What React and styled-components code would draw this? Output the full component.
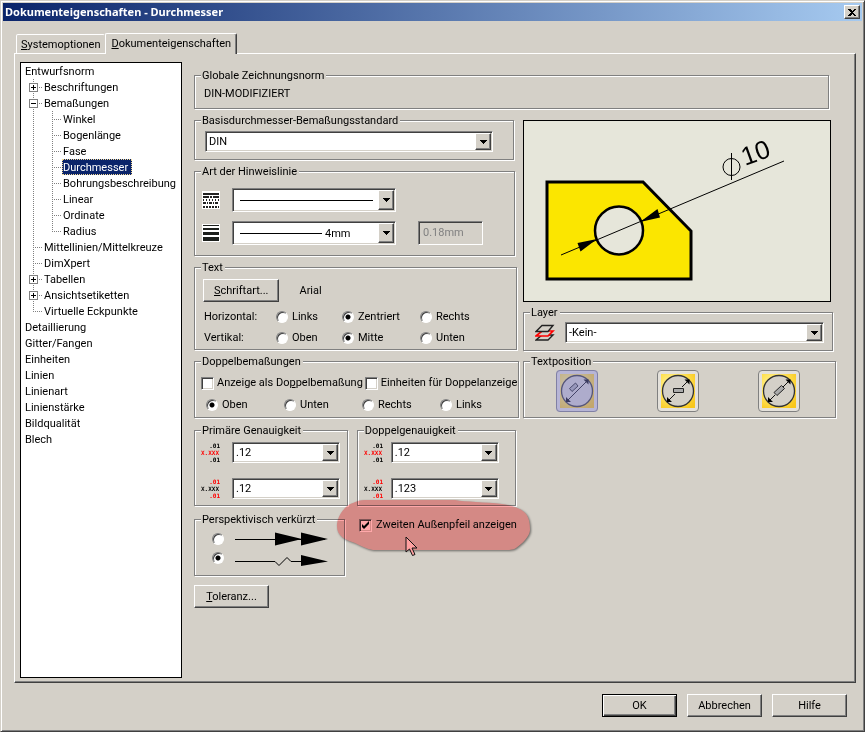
import React, {useState} from 'react';
import styled, {createGlobalStyle, css} from 'styled-components';

const GlobalStyle = createGlobalStyle`
  * {
    box-sizing: border-box;
  }
  body {
    margin: 0;
    background: #d4d0c8;
  }
  body, button, input, select {
    font-family: Roboto, 'Liberation Sans', sans-serif;
    font-size: 11px;
    line-height: 13px;
    color: #000;
  }
`;

const Raised = css`
  background: #d4d0c8;
  border: 1px solid;
  border-color: #fff #404040 #404040 #fff;
  box-shadow: inset -1px -1px 0 #808080;
`;

const Sunken = css`
  border: 1px solid;
  border-color: #808080 #fff #fff #808080;
  box-shadow: inset 1px 1px 0 #404040, inset -1px -1px 0 #d4d0c8;
`;

const Dialog = styled.div`
  display: flex;
  flex-direction: column;
  min-height: 100vh;
  padding: 2px;
  background: #d4d0c8;
  border: 1px solid;
  border-color: #d4d0c8 #404040 #404040 #d4d0c8;
  box-shadow: inset 1px 1px 0 #fff, inset -1px -1px 0 #808080;
`;

const TitleBar = styled.header`
  display: flex;
  align-items: center;
  justify-content: space-between;
  height: 18px;
  padding: 0 2px;
  background: linear-gradient(to right, #0a246a, #a6caf0);
`;

const Title = styled.h1`
  margin: 0;
  font-family: 'Noto Sans', sans-serif;
  font-size: 11px;
  line-height: 18px;
  font-weight: bold;
  color: #fff;
`;

const CloseButton = styled.button`
  ${Raised};
  display: flex;
  align-items: center;
  justify-content: center;
  width: 16px;
  height: 14px;
  padding: 0;
`;

const Tabs = styled.div`
  display: flex;
  align-items: flex-end;
  padding: 12px 13px 0;
`;

const Tab = styled.button`
  height: 19px;
  padding: 0 4px;
  white-space: nowrap;
  background: #d4d0c8;
  border: 1px solid;
  border-color: #fff transparent transparent #fff;
  border-bottom: 0;
  border-radius: 2px 2px 0 0;
  ${({$active}) => $active && css`
    position: relative;
    height: 21px;
    padding: 0 5px 2px;
    margin-bottom: -1px;
    border-right: 1px solid #404040;
    box-shadow: inset -1px 0 0 #808080;
  `}
`;

const Panel = styled.div`
  flex: 1;
  display: flex;
  gap: 12px;
  margin: 0 6px 0 11px;
  padding: 8px 19px 4px 5px;
  border: 1px solid;
  border-color: #fff #404040 #404040 #fff;
  box-shadow: inset -1px -1px 0 #808080;
`;

const TreeView = styled.ul`
  flex: none;
  width: 162px;
  margin: 0;
  padding: 0 0 0 3px;
  list-style: none;
  background: #fff;
  border: 1px solid #000;
`;

const TreeRow = styled.li`
  display: flex;
  height: 16px;
  line-height: 17px;
  white-space: nowrap;
`;

const vLine = height => `repeating-linear-gradient(to bottom, #808080 0 1px, transparent 1px 2px) 9px 0 / 1px ${height} no-repeat`;
const hLine = 'repeating-linear-gradient(to right, #808080 0 1px, transparent 1px 2px) 9px 8px / 10px 1px no-repeat';
const guides = {
  pass: vLine('16px'),
  branch: `${vLine('16px')}, ${hLine}`,
  end: `${vLine('8px')}, ${hLine}`,
};

const Guide = styled.span`
  display: flex;
  justify-content: center;
  width: 19px;
  padding-top: 4px;
  background: ${({$kind}) => guides[$kind]};
`;

const Toggle = styled.button`
  width: 9px;
  height: 9px;
  padding: 0;
  line-height: 0;
  background: #fff;
  border: 1px solid #808080;
`;

const TreeLabel = styled.span`
  padding: 0 1px;
  ${({$selected}) => $selected && css`
    padding: 0 4px 0 1px;
    color: #fff;
    background: #0a246a;
    outline: 1px dotted #f5db95;
    outline-offset: -1px;
  `}
`;

const Main = styled.main`
  flex: 1;
  min-width: 0;
  padding-top: 7px;
`;

const Columns = styled.div`
  display: grid;
  grid-template-columns: 325fr 313fr;
  gap: 4px;
  padding-top: 5px;
`;

const Column = styled.div`
  display: flex;
  flex-direction: column;
  gap: 5px;
  min-width: 0;
`;

const PreviewColumn = styled(Column)`
  gap: 4px;
  padding-top: 6px;
`;

const Group = styled.fieldset`
  flex: ${({$grow}) => $grow || 'none'};
  min-width: 0;
  height: ${({$height}) => $height}px;
  margin: 0 ${({$inset}) => $inset || 0}px 0 0;
  padding: 0 6px;
  border: 1px solid #808080;
  box-shadow: 1px 1px 0 #fff, inset 1px 1px 0 #fff;
`;

const Legend = styled.legend`
  padding: 0 2px 0 1px;
  height: 13px;
  line-height: 14px;
  white-space: nowrap;
  background: #d4d0c8;
`;

const NormName = styled.div`
  padding: 3px 3px 0;
  line-height: 17px;
`;

const ComboBox = styled.span`
  display: grid;
  flex: ${({$width}) => $width ? `0 0 ${$width}px` : '1'};
  height: ${({$tall}) => $tall ? 24 : 21}px;
  padding: 2px;
  background: #fff;
  ${Sunken};
  & > * {
    grid-area: 1 / 1;
  }
`;

const ComboSelect = styled.select`
  width: 100%;
  min-width: 0;
  padding: 0 18px 0 ${({$indent}) => $indent || 1}px;
  appearance: none;
  background: transparent;
  border: 0;
  border-radius: 0;
`;

const ComboArrow = styled.span`
  ${Raised};
  display: flex;
  align-items: center;
  justify-content: center;
  justify-self: end;
  width: 16px;
  margin: -1px;
  pointer-events: none;
`;

const ComboLine = styled.span`
  align-self: center;
  width: ${({$width}) => $width}px;
  height: 1px;
  margin-left: 5px;
  background: #000;
  pointer-events: none;
`;

const Row = styled.div`
  display: flex;
  align-items: center;
  gap: ${({$gap}) => $gap || 0}px;
  padding: ${({$pad}) => $pad || 0};
`;

const StyleRows = styled.div`
  display: grid;
  gap: 9px;
  padding: 10px 1px 0;
`;

const WidthField = styled.input`
  width: 65px;
  height: 24px;
  margin-left: 10px;
  padding: 0 4px 2px;
  background: #d4d0c8;
  color: #808080;
  ${Sunken};
`;

const Button = styled.button`
  ${Raised};
  min-width: 75px;
  height: 23px;
  padding: 0 10px;
  white-space: nowrap;
  ${({$primary}) => $primary && css`
    border-color: #000;
    box-shadow: inset 1px 1px 0 #fff, inset -1px -1px 0 #404040, inset -2px -2px 0 #808080;
  `}
`;

const AlignGrid = styled.div`
  display: grid;
  grid-template-columns: 72px 66px 78px 1fr;
  row-gap: 5px;
  padding: 7px 3px 0;
  line-height: 16px;
`;

const Option = styled.label`
  display: flex;
  align-items: center;
  gap: 4px;
  line-height: 16px;
  white-space: nowrap;
`;

const Radio = styled.input.attrs({type: 'radio'})`
  flex: none;
  appearance: none;
  width: 12px;
  height: 12px;
  margin: 0;
  border: 1px solid;
  border-color: #808080 #fff #fff #808080;
  border-radius: 50%;
  background: #fff;
  box-shadow: inset 1px 1px 0 #404040;
  &:checked {
    background: radial-gradient(circle, #000 2px, #fff 3px);
  }
`;

const CheckBox = styled.input.attrs({type: 'checkbox'})`
  flex: none;
  appearance: none;
  width: 13px;
  height: 13px;
  margin: 0;
  background: #fff;
  ${Sunken};
  &:checked {
    background: #fff url("data:image/svg+xml,%3Csvg xmlns='http://www.w3.org/2000/svg' width='11' height='11'%3E%3Cpath d='M2 4v3l2 2 5-5V1L4 6z'/%3E%3C/svg%3E") no-repeat;
  }
`;

const DualChecks = styled.div`
  display: flex;
  gap: 2px;
  padding: 7px 0 0;
  & > label {
    gap: 3px;
  }
`;

const DualRadios = styled.div`
  display: grid;
  grid-template-columns: repeat(3, 78px) 1fr;
  padding: 6px 5px 0;
`;

const PrecisionRows = styled.div`
  display: grid;
  gap: 15px;
  padding: 5px 0 0;
`;

const Precisions = styled.div`
  display: flex;
  gap: 9px;
  padding: 1px 3px 0 0;
`;

const Foreshortened = styled.div`
  display: flex;
  gap: 12px;
  padding-top: 2px;
`;

const ArrowOptions = styled.div`
  display: grid;
  gap: 3px;
  padding: 5px 11px 0;
`;

const ArrowOption = styled.label`
  display: flex;
  align-items: center;
  gap: 11px;
`;

const Highlighted = styled.div`
  position: relative;
  flex: 1;
  padding: 4px 0 0 2px;
`;

const Marker = styled.svg`
  position: absolute;
  left: -22px;
  top: -15px;
  mix-blend-mode: multiply;
  filter: drop-shadow(1px 1px 1px rgba(0, 0, 0, 0.5));
  pointer-events: none;
`;

const Pointer = styled.svg`
  position: absolute;
  left: 48px;
  top: 23px;
  pointer-events: none;
`;

const ToleranceRow = styled.div`
  padding-top: 4px;
`;

const Preview = styled.div`
  height: 182px;
  margin-right: 5px;
  background: #e6e6da;
  border: 1px solid #000;
  svg {
    display: block;
    width: 100%;
    height: 100%;
  }
`;

const PositionRow = styled.div`
  display: flex;
  gap: 59px;
  padding: 2px 26px 0;
`;

const PositionButton = styled.button`
  width: 42px;
  height: 42px;
  padding: 0;
  line-height: 0;
  background: none;
  border: 0;
`;

const Footer = styled.footer`
  display: flex;
  justify-content: flex-end;
  gap: 10px;
  padding: 11px 15px 12px;
`;

const treeItems = [
  {label: 'Entwurfsnorm', guides: []},
  {label: 'Beschriftungen', guides: ['branch'], toggle: 'plus'},
  {label: 'Bemaßungen', guides: ['branch'], toggle: 'minus'},
  {label: 'Winkel', guides: ['pass', 'branch']},
  {label: 'Bogenlänge', guides: ['pass', 'branch']},
  {label: 'Fase', guides: ['pass', 'branch']},
  {label: 'Durchmesser', guides: ['pass', 'branch']},
  {label: 'Bohrungsbeschreibung', guides: ['pass', 'branch']},
  {label: 'Linear', guides: ['pass', 'branch']},
  {label: 'Ordinate', guides: ['pass', 'branch']},
  {label: 'Radius', guides: ['pass', 'end']},
  {label: 'Mittellinien/Mittelkreuze', guides: ['branch']},
  {label: 'DimXpert', guides: ['branch']},
  {label: 'Tabellen', guides: ['branch'], toggle: 'plus'},
  {label: 'Ansichtsetiketten', guides: ['branch'], toggle: 'plus'},
  {label: 'Virtuelle Eckpunkte', guides: ['end']},
  ...['Detaillierung', 'Gitter/Fangen', 'Einheiten', 'Linien', 'Linienart', 'Linienstärke', 'Bildqualität', 'Blech']
    .map(label => ({label, guides: []})),
];

const Tree = () => {
  const [selected, setSelected] = useState('Durchmesser');
  return (
    <TreeView>
      {treeItems.map(item =>
        <TreeRow key={item.label} onClick={() => setSelected(item.label)}>
          {item.guides.map((kind, i) =>
            <Guide $kind={kind} key={i}>
              {item.toggle &&
              <Toggle aria-label={item.label}>
                <svg width="7" height="7" shapeRendering="crispEdges">
                  <path d={item.toggle === 'plus' ? 'M1 3h5v1H1zM3 1h1v5H3z' : 'M1 3h5v1H1z'}/>
                </svg>
              </Toggle>
              }
            </Guide>
          )}
          <TreeLabel $selected={item.label === selected}>{item.label}</TreeLabel>
        </TreeRow>
      )}
    </TreeView>
  );
};

const Combo = ({label, value, width, tall, indent, line}) => (
  <ComboBox $width={width} $tall={tall}>
    <ComboSelect aria-label={label} $indent={indent}>
      <option>{value}</option>
    </ComboSelect>
    {line && <ComboLine $width={line}/>}
    <ComboArrow>
      <svg width="7" height="4" shapeRendering="crispEdges"><path d="M0 0h7L3.5 4z"/></svg>
    </ComboArrow>
  </ComboBox>
);

const RadioOption = ({name, label, checked}) => (
  <Option>
    <Radio name={name} defaultChecked={checked}/>
    <span>{label}</span>
  </Option>
);

const LineStyleIcon = () => (
  <svg width="18" height="18" shapeRendering="crispEdges">
    <path d="M0 0h18v18H0z" fill="#fff"/>
    <path d="M1 2h16v2H1z" fill="#222"/>
    <g stroke="#222" strokeWidth="2" fill="none">
      <path d="M1 6h16" strokeDasharray="6 1 2 1"/>
      <path d="M1 9h16" strokeDasharray="1 2"/>
      <path d="M1 12h16" strokeDasharray="3 1 1 1"/>
      <path d="M1 16h16" strokeDasharray="2 1"/>
    </g>
  </svg>
);

const LineWidthIcon = () => (
  <svg width="18" height="18" shapeRendering="crispEdges">
    <path d="M0 0h18v18H0z" fill="#fff"/>
    <path d="M1 1h16v1H1zM1 4h16v2H1zM1 8h16v3H1zM1 13h16v4H1z" fill="#1c1f1c"/>
  </svg>
);

const PrecisionIcon = ({tolerance}) => {
  const main = tolerance ? '#000' : '#f00';
  const side = tolerance ? '#f00' : '#000';
  return (
    <svg width="19" height="19" fontFamily="DejaVu Sans Mono" fontWeight="bold" fontSize="6">
      <text x="19" y="5" textAnchor="end" fill={side}>.01</text>
      <text x="0" y="12" fill={main}>X.XXX</text>
      <text x="19" y="19" textAnchor="end" fill={side}>.01</text>
    </svg>
  );
};

const PrecisionGroup = ({title, values, grow, pad}) => (
  <Group $height={82} $grow={grow}>
    <Legend>{title}</Legend>
    <PrecisionRows>
      {values.map((value, i) =>
        <Row $gap={pad} key={i}>
          <PrecisionIcon tolerance={i === 1}/>
          <Combo label={title} value={value} width={108} indent={1}/>
        </Row>
      )}
    </PrecisionRows>
  </Group>
);

const LayerIcon = () => (
  <svg width="20" height="18" fill="none" strokeWidth="1.4">
    <path d="M1 16l6-5h11l-5 5z" stroke="#222" fill="#d4d0c8"/>
    <path d="M1 12l6-5h11l-5 5z" stroke="#f00" strokeWidth="1.700" fill="#d4d0c8"/>
    <path d="M1 7.500 7 1.500h11l-5 6z" stroke="#222" fill="#d4d0c8"/>
  </svg>
);

const DiameterPreview = () => (
  <svg viewBox="0 0 306 180" preserveAspectRatio="xMinYMin meet">
    <path d="M23 61h96l48 49v48H23z" fill="#fbe600" stroke="#000" strokeWidth="3"/>
    <circle cx="95" cy="109.500" r="24" fill="#e6e6da" stroke="#000" strokeWidth="2.500"/>
    <path d="M37 134 260 40" stroke="#000"/>
    <path d="M116 101l17.500-13 2.500 8.500zM73 118l-19.500 4 3 8.500z"/>
    <circle cx="207.500" cy="46" r="8.500" fill="none" stroke="#000"/>
    <path d="M207.500 32v27" stroke="#000"/>
    <text transform="translate(221 45) rotate(-20)" fontFamily="Liberation Sans" fontSize="26">10</text>
  </svg>
);

const positions = [
  {id: 'above', name: 'Text über der Linie', box: 'M13.500 18.500l6-5.500 2.500 3-6 5.500z', line: 'M12 30 31 11'},
  {id: 'broken', name: 'Text horizontal', box: 'M16.500 18.500h10v4h-10z', line: 'M12 30l6-6M25 17l6-6'},
  {id: 'aligned', name: 'Text ausgerichtet', box: 'M16 22.500l7.500-7 3 3-7.500 7z', line: 'M12 30l5-5M25 17l6-6'},
];

const PositionIcon = ({box, line, active}) => (
  <svg width="42" height="42">
    <defs>
      <radialGradient id="glow" cx="35%" cy="35%" r="80%">
        <stop offset="0" stopColor="#fff6b0"/>
        <stop offset="0.5" stopColor="#ffe45c"/>
        <stop offset="1" stopColor="#f9c71c"/>
      </radialGradient>
    </defs>
    <rect x="0.500" y="0.500" width="41" height="41" rx="3.500" fill="#e4e1db" stroke="#808080"/>
    <rect x="4" y="4" width="34" height="34" fill="url(#glow)"/>
    <circle cx="21" cy="21" r="15.500" fill="#d4d0c8" stroke="#333" strokeWidth="1.300"/>
    <path d={line} stroke="#111"/>
    <path d="M32.500 9.500v5l-5-5zM10 32v-5l5 5z"/>
    <path d={box} fill="#aaa" stroke="#222"/>
    {active && <rect x="0" y="0" width="42" height="42" rx="4" fill="#8080d0" opacity="0.45"/>}
  </svg>
);

const App = () => {
  const [position, setPosition] = useState('above');

  return (
    <>
      <GlobalStyle/>
      <Dialog>
        <TitleBar>
          <Title>Dokumenteigenschaften - Durchmesser</Title>
          <CloseButton aria-label="Schließen">
            <svg width="8" height="7" shapeRendering="crispEdges"><path d="M0 0h2l2 2 2-2h2L5 3.500 8 7H6L4 5 2 7H0l3-3.500z"/></svg>
          </CloseButton>
        </TitleBar>
        <Tabs role="tablist">
          <Tab role="tab"><u>S</u>ystemoptionen</Tab>
          <Tab role="tab" aria-selected="true" $active><u>D</u>okumenteigenschaften</Tab>
        </Tabs>
        <Panel>
          <Tree/>
          <Main>
            <Group $height={40} $inset={7}>
              <Legend>Globale Zeichnungsnorm</Legend>
              <NormName>DIN-MODIFIZIERT</NormName>
            </Group>
            <Columns>
              <Column>
                <Group $height={46} $inset={5}>
                  <Legend>Basisdurchmesser-Bemaßungsstandard</Legend>
                  <Row $pad="4px 14px 0 4px">
                    <Combo label="Bemaßungsstandard" value="DIN"/>
                  </Row>
                </Group>
                <Group $height={91} $inset={4}>
                  <Legend>Art der Hinweislinie</Legend>
                  <StyleRows>
                    <Row $gap={12}>
                      <LineStyleIcon/>
                      <Combo label="Linienart" value="" width={164} line={133} tall/>
                    </Row>
                    <Row $gap={12}>
                      <LineWidthIcon/>
                      <Combo label="Linienstärke" value="4mm" width={164} line={82} indent={90} tall/>
                      <WidthField aria-label="Stärke" defaultValue="0.18mm" disabled/>
                    </Row>
                  </StyleRows>
                </Group>
                <Group $height={89} $inset={2}>
                  <Legend>Text</Legend>
                  <Row $gap={20} $pad="5px 2px 0">
                    <Button><u>S</u>chriftart...</Button>
                    <span>Arial</span>
                  </Row>
                  <AlignGrid>
                    <span>Horizontal:</span>
                    <RadioOption name="horizontal" label="Links"/>
                    <RadioOption name="horizontal" label="Zentriert" checked/>
                    <RadioOption name="horizontal" label="Rechts"/>
                    <span>Vertikal:</span>
                    <RadioOption name="vertical" label="Oben"/>
                    <RadioOption name="vertical" label="Mitte" checked/>
                    <RadioOption name="vertical" label="Unten"/>
                  </AlignGrid>
                </Group>
                <Group $height={63}>
                  <Legend>Doppelbemaßungen</Legend>
                  <DualChecks>
                    <Option><CheckBox/><span>Anzeige als Do<u>p</u>pelbemaßung</span></Option>
                    <Option><CheckBox/><span>Einheiten für Doppelanzeige</span></Option>
                  </DualChecks>
                  <DualRadios>
                    <RadioOption name="dual" label="Oben" checked/>
                    <RadioOption name="dual" label="Unten"/>
                    <RadioOption name="dual" label="Rechts"/>
                    <RadioOption name="dual" label="Links"/>
                  </DualRadios>
                </Group>
                <Precisions>
                  <PrecisionGroup title="Primäre Genauigkeit" values={['.12', '.12']} grow="154" pad={12}/>
                  <PrecisionGroup title="Doppelgenauigkeit" values={['.12', '.123']} grow="160" pad={8}/>
                </Precisions>
                <Foreshortened>
                  <Group $height={63} $grow="0 0 151px">
                    <Legend>Perspektivisch verkürzt</Legend>
                    <ArrowOptions>
                      <ArrowOption>
                        <Radio name="foreshortened" aria-label="Doppelpfeil"/>
                        <svg width="93" height="16">
                          <path d="M0 8h90" stroke="#000" shapeRendering="crispEdges"/>
                          <path d="M40 1.500l27 6.500-27 6.500zM66 1.500 93 8l-27 6.500z"/>
                        </svg>
                      </ArrowOption>
                      <ArrowOption>
                        <Radio name="foreshortened" aria-label="Zickzack" defaultChecked/>
                        <svg width="93" height="16">
                          <path d="M0 11.500h40l4 4 8-8 4 4h14" stroke="#000" fill="none"/>
                          <path d="M66 5l27 6.500L66 16z"/>
                        </svg>
                      </ArrowOption>
                    </ArrowOptions>
                  </Group>
                  <Highlighted>
                    <Option><CheckBox defaultChecked/><span>Zweiten Außenpfeil anzeigen</span></Option>
                    <Marker width="200" height="58">
                      <path
                        d="M2 26C3 16 11 7 18 5c4-2 7-3 12-3l90 0c10 2 30 2 47 4 13 2 20 5 24 10 3 4 4 9 4 16 0 6-8 14-14 18-3 2-8 2-10 2H38c-6-1-12-4-18-7C10 42 1 38 2 26z"
                        fill="#ffa8aa"
                      />
                    </Marker>
                    <Pointer width="13" height="21">
                      <path d="M1 1v15l3.500-3 3 6.500 2.500-1-3-6.500H12z" fill="#ffa0a0" stroke="#111"/>
                    </Pointer>
                  </Highlighted>
                </Foreshortened>
                <ToleranceRow>
                  <Button><u>T</u>oleranz...</Button>
                </ToleranceRow>
              </Column>
              <PreviewColumn>
                <Preview><DiameterPreview/></Preview>
                <Group $height={45} $inset={3}>
                  <Legend>Layer</Legend>
                  <Row $gap={10} $pad="3px 2px 0 5px">
                    <LayerIcon/>
                    <Combo label="Layer" value="-Kein-"/>
                  </Row>
                </Group>
                <Group $height={63}>
                  <Legend>Textposition</Legend>
                  <PositionRow>
                    {positions.map(({id, name, box, line}) =>
                      <PositionButton key={id} aria-label={name} onClick={() => setPosition(id)}>
                        <PositionIcon box={box} line={line} active={id === position}/>
                      </PositionButton>
                    )}
                  </PositionRow>
                </Group>
              </PreviewColumn>
            </Columns>
          </Main>
        </Panel>
        <Footer>
          <Button $primary>OK</Button>
          <Button>Abbrechen</Button>
          <Button>Hilfe</Button>
        </Footer>
      </Dialog>
    </>
  );
};

export default App;
